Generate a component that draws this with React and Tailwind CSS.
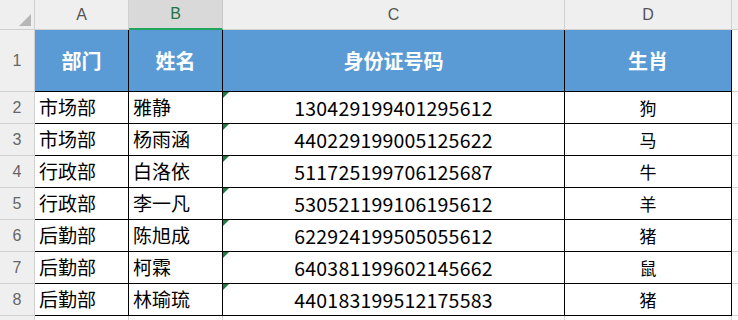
import React from "react";

const rows = [
  ["市场部", "雅静", "130429199401295612", "狗"],
  ["市场部", "杨雨涵", "440229199005125622", "马"],
  ["行政部", "白洛依", "511725199706125687", "牛"],
  ["行政部", "李一凡", "530521199106195612", "羊"],
  ["后勤部", "陈旭成", "622924199505055612", "猪"],
  ["后勤部", "柯霖", "640381199602145662", "鼠"],
  ["后勤部", "林瑜琉", "440183199512175583", "猪"],
];

const cjk = { fontFamily: '"Noto Sans CJK SC", "Noto Sans", sans-serif' };
const ui = { fontFamily: '"Liberation Sans", Arial, sans-serif' };

const App = () => {
  return (
    <div className="w-[738px] h-[320px] overflow-hidden bg-white" style={cjk}>
      {/* column headers */}
      <div className="flex h-[30px] bg-[#efefef] text-[16px] text-[#555]" style={ui}>
        <div className="relative w-[35px] border-r border-b border-[#d0d0d0]">
          <div className="absolute right-[3px] bottom-[3px] w-0 h-0 border-l-[12px] border-l-transparent border-b-[12px] border-b-[#b6b6b6]" />
        </div>
        <div className="w-[94px] flex items-center justify-center border-r border-b border-[#d0d0d0]">A</div>
        <div className="w-[94px] flex items-center justify-center bg-[#d9d9d9] text-[#217346] border-r border-[#c8c8c8] border-b-2 border-b-[#22a45a]">B</div>
        <div className="w-[342px] flex items-center justify-center border-r border-b border-[#d0d0d0]">C</div>
        <div className="w-[167px] flex items-center justify-center border-r border-b border-[#d0d0d0]">D</div>
        <div className="flex-1 border-b border-[#d0d0d0]" />
      </div>

      {/* row 1 */}
      <div className="flex h-[62px]">
        <div className="w-[35px] flex items-center justify-center bg-[#efefef] text-[16px] text-[#666] border-r border-b border-[#d0d0d0]" style={ui}>1</div>
        <div className="w-[94px] flex items-center justify-center bg-[#5b9bd5] text-white font-bold text-[20px] border-r border-b border-black">部门</div>
        <div className="w-[94px] flex items-center justify-center bg-[#5b9bd5] text-white font-bold text-[20px] border-r border-b border-black">姓名</div>
        <div className="w-[342px] flex items-center justify-center bg-[#5b9bd5] text-white font-bold text-[20px] border-r border-b border-black">身份证号码</div>
        <div className="w-[167px] flex items-center justify-center bg-[#5b9bd5] text-white font-bold text-[20px] border-r border-b border-black">生肖</div>
        <div className="flex-1 border-b border-[#d4d4d4]" />
      </div>

      {rows.map((r, i) => (
        <div key={i} className="flex h-[32px] text-[19px] text-black">
          <div className="w-[35px] flex items-center justify-center bg-[#efefef] text-[16px] text-[#666] border-r border-b border-[#d0d0d0]" style={ui}>{i + 2}</div>
          <div className="w-[94px] flex items-center pl-[4px] border-r border-b border-black">{r[0]}</div>
          <div className="w-[94px] flex items-center pl-[4px] border-r border-b border-black">{r[1]}</div>
          <div className="relative w-[342px] flex items-center justify-center tracking-[0.2px] text-[19.5px] border-r border-b border-black">
            <div className="absolute left-0 top-0 w-0 h-0 border-t-[6px] border-t-[#1f7a3f] border-r-[6px] border-r-transparent" />
            {r[2]}
          </div>
          <div className="w-[167px] flex items-center justify-center text-[17px] border-r border-b border-black">{r[3]}</div>
          <div className="flex-1 border-b border-[#d4d4d4]" />
        </div>
      ))}

      {/* row 9 partial */}
      <div className="flex h-[32px]">
        <div className="w-[35px] bg-[#efefef] border-r border-[#d0d0d0]" />
        <div className="w-[94px] border-r border-[#d4d4d4]" />
        <div className="w-[94px] border-r border-[#d4d4d4]" />
        <div className="w-[342px] border-r border-[#d4d4d4]" />
        <div className="w-[167px] border-r border-[#d4d4d4]" />
        <div className="flex-1" />
      </div>
    </div>
  );
};

export default App;
